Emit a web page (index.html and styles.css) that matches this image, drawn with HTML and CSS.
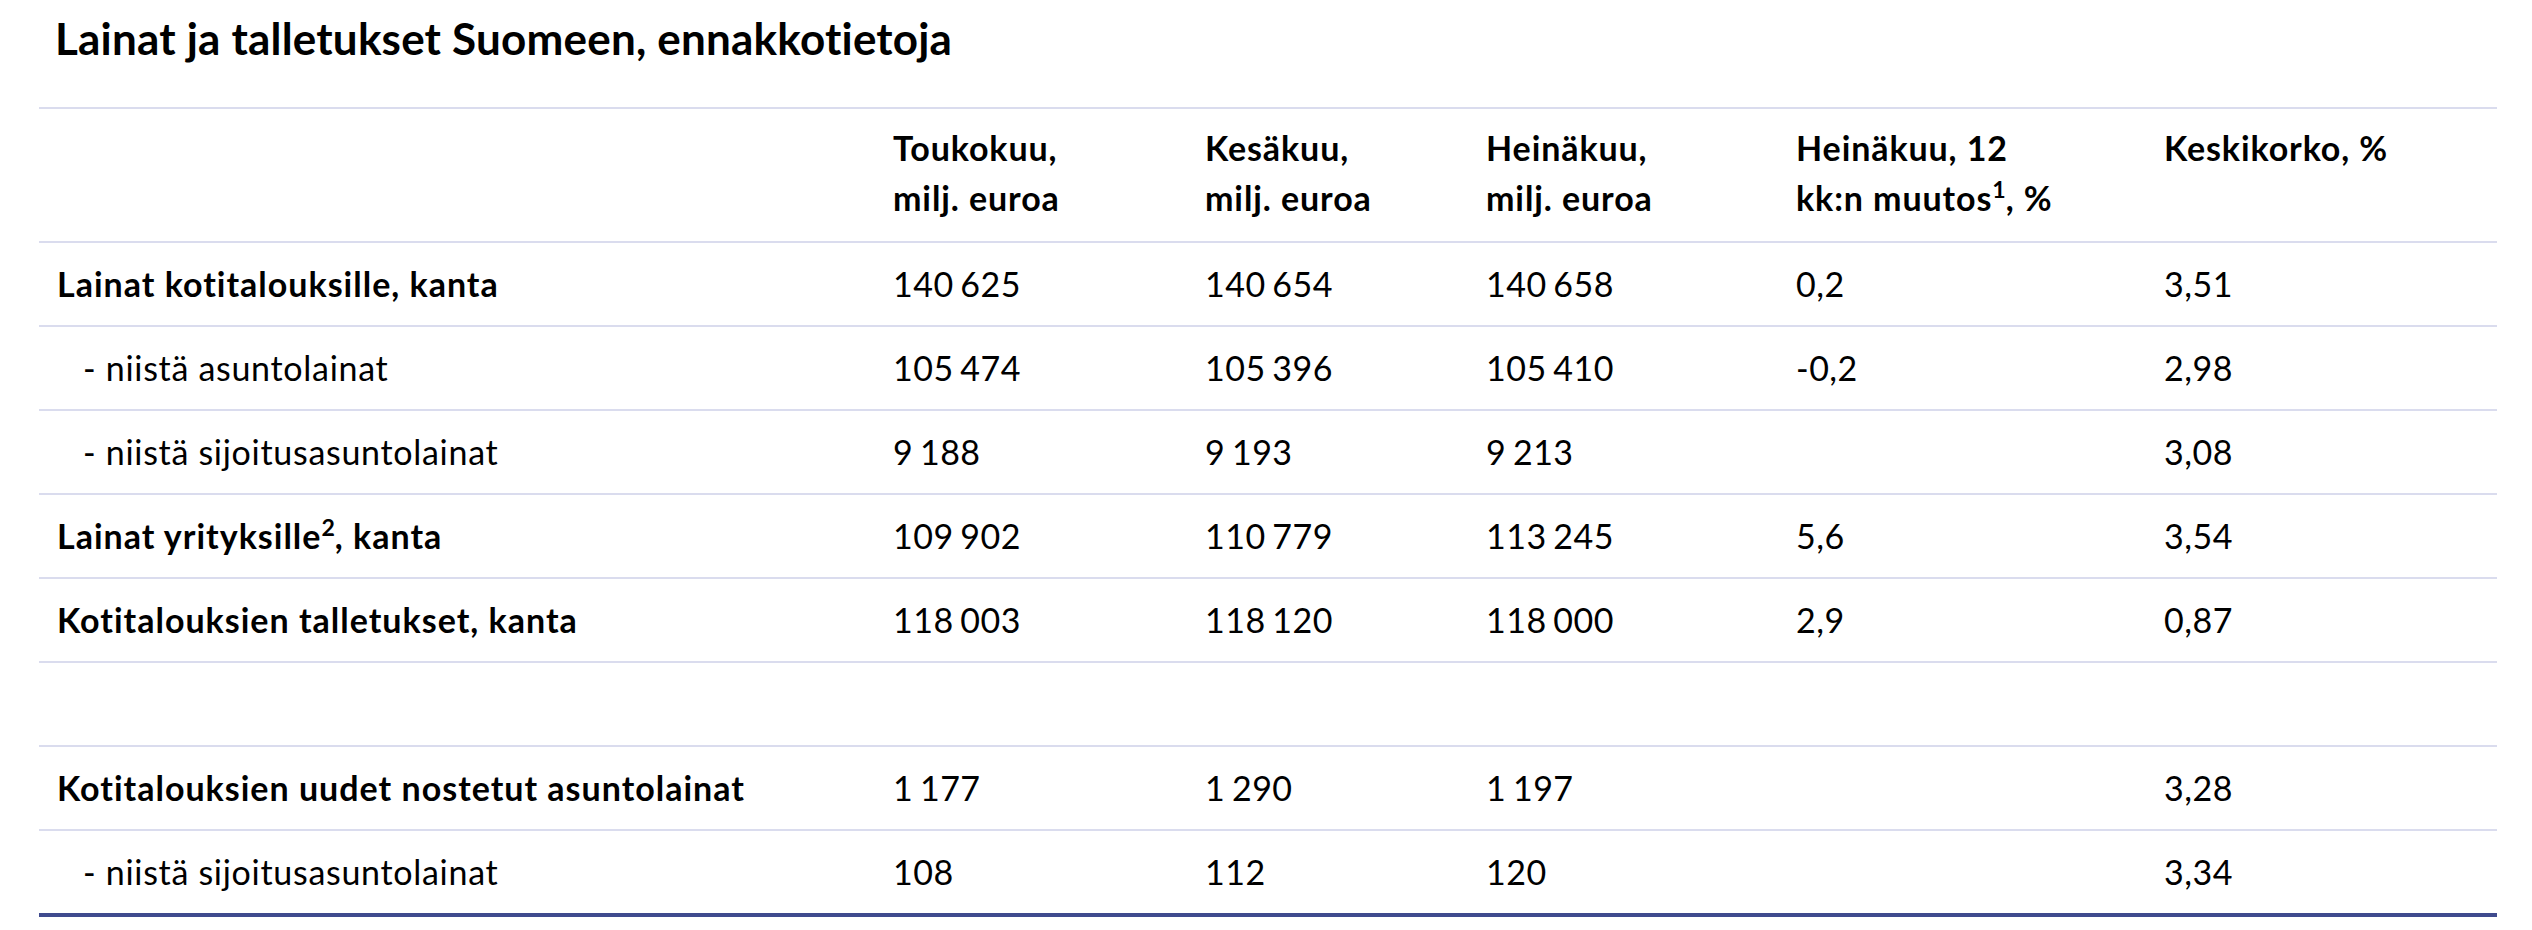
FILE: index.html
```html
<!DOCTYPE html>
<html lang="fi">
<head>
<meta charset="utf-8">
<title>Lainat ja talletukset Suomeen, ennakkotietoja</title>
<link rel="stylesheet" href="styles.css">
</head>
<body>
<div class="wrap">
  <h1 class="title">Lainat ja talletukset Suomeen, ennakkotietoja</h1>
  <table class="data">
    <colgroup>
      <col class="c1"><col class="c2"><col class="c3"><col class="c4"><col class="c5"><col class="c6">
    </colgroup>
    <thead>
      <tr>
        <th></th>
        <th>Toukokuu,<br>milj. euroa</th>
        <th>Kesäkuu,<br>milj. euroa</th>
        <th>Heinäkuu,<br>milj. euroa</th>
        <th>Heinäkuu, 12<br>kk:n muutos<sup>1</sup>, %</th>
        <th>Keskikorko, %</th>
      </tr>
    </thead>
    <tbody>
      <tr>
        <th class="rh">Lainat kotitalouksille, kanta</th>
        <td class="num">140 625</td><td class="num">140 654</td><td class="num">140 658</td><td class="num">0,2</td><td class="num">3,51</td>
      </tr>
      <tr>
        <td class="sub">- niistä asuntolainat</td>
        <td class="num">105 474</td><td class="num">105 396</td><td class="num">105 410</td><td class="num">-0,2</td><td class="num">2,98</td>
      </tr>
      <tr>
        <td class="sub">- niistä sijoitusasuntolainat</td>
        <td class="num">9 188</td><td class="num">9 193</td><td class="num">9 213</td><td class="num"></td><td class="num">3,08</td>
      </tr>
      <tr>
        <th class="rh">Lainat yrityksille<sup>2</sup>, kanta</th>
        <td class="num">109 902</td><td class="num">110 779</td><td class="num">113 245</td><td class="num">5,6</td><td class="num">3,54</td>
      </tr>
      <tr>
        <th class="rh">Kotitalouksien talletukset, kanta</th>
        <td class="num">118 003</td><td class="num">118 120</td><td class="num">118 000</td><td class="num">2,9</td><td class="num">0,87</td>
      </tr>
      <tr class="empty">
        <td></td><td></td><td></td><td></td><td></td><td></td>
      </tr>
      <tr>
        <th class="rh">Kotitalouksien uudet nostetut asuntolainat</th>
        <td class="num">1 177</td><td class="num">1 290</td><td class="num">1 197</td><td class="num"></td><td class="num">3,28</td>
      </tr>
      <tr class="last">
        <td class="sub">- niistä sijoitusasuntolainat</td>
        <td class="num">108</td><td class="num">112</td><td class="num">120</td><td class="num"></td><td class="num">3,34</td>
      </tr>
    </tbody>
  </table>
</div>
</body>
</html>
```
FILE: styles.css
```css
html, body {
  margin: 0;
  padding: 0;
  background: #ffffff;
}

body {
  font-family: Lato, "Open Sans", "Liberation Sans", sans-serif;
  color: #000000;
}

.wrap {
  padding: 0 35px 0 39px;
}

.title {
  font-size: 44px;
  line-height: 1.2;
  font-weight: 700;
  letter-spacing: 0.2px;
  margin: 12px 0 42px 0;
  padding-left: 16px;
}

.data {
  width: 2458px;
  table-layout: fixed;
  border-collapse: collapse;
  font-size: 34px;
  line-height: 50px;
}

.c1 { width: 836px; }
.c2 { width: 312px; }
.c3 { width: 281px; }
.c4 { width: 310px; }
.c5 { width: 368px; }
.c6 { width: 351px; }

.data thead tr {
  border-top: 2px solid #dadcee;
  border-bottom: 2px solid #dadcee;
}

.data thead th {
  text-align: left;
  vertical-align: top;
  font-weight: 700;
  letter-spacing: 0.9px;
  padding: 14px 18px 18px 18px;
}

.data tbody tr {
  border-bottom: 2px solid #dadcee;
}

.data tbody tr.last {
  border-bottom: 4px solid #3f4b8e;
}

.data td,
.data tbody th {
  text-align: left;
  vertical-align: top;
  padding: 16px 18px;
  height: 50px;
}

.data .rh {
  font-weight: 700;
  letter-spacing: 1px;
}

.data td {
  font-weight: 400;
}

.data .sub {
  padding-left: 44px;
  letter-spacing: 0.7px;
}

.data .num {
  letter-spacing: 0.5px;
  word-spacing: -2.5px;
}

.data sup {
  font-size: 0.68em;
  line-height: 0;
  letter-spacing: 0;
  vertical-align: 0.55em;
}
```
